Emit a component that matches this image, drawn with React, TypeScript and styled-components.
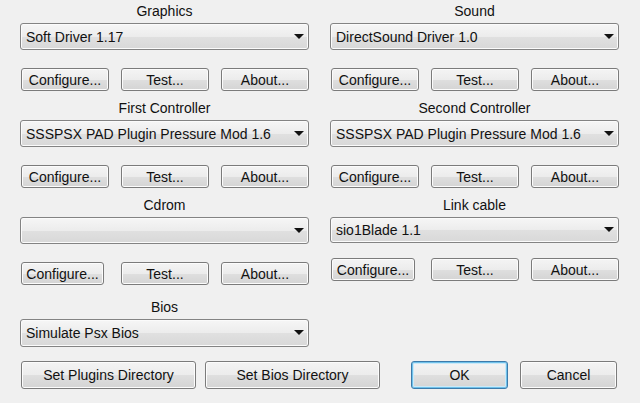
import styled, { createGlobalStyle } from "styled-components";

const GlobalStyle = createGlobalStyle`
  html, body {
    margin: 0;
    padding: 0;
    background: #f0f0f0;
  }
  body {
    font-family: "Liberation Sans", Arial, sans-serif;
    font-size: 14px;
    color: #111;
  }
`

const Dialog = styled.div`
  width: 640px;
  height: 403px;
  box-sizing: border-box;
  padding: 1px 0 0 20px;
  background: #f0f0f0;
`

const PluginGrid = styled.div`
  display: grid;
  grid-template-columns: 289px 289px;
  column-gap: 21px;
  row-gap: 7px;
`

const Section = styled.div<{ $offset?: number }>`
  display: flex;
  flex-direction: column;
  width: 289px;
  margin-top: ${(p) => p.$offset ?? 0}px;
`

const Label = styled.div`
  height: 20px;
  line-height: 20px;
  text-align: center;
  white-space: nowrap;
`

const Combo = styled.div<{ $height?: number }>`
  position: relative;
  margin-top: 2px;
  height: ${(p) => p.$height ?? 27}px;
  box-sizing: border-box;
  border: 1px solid #838383;
  border-radius: 3px;
  background: linear-gradient(#f6f6f6 0%, #ececec 50%, #e0e0e0 51%, #d8d8d8 100%);
  box-shadow: inset 0 0 0 1px #fbfbfb;
  display: flex;
  align-items: center;
  padding: 0 18px 0 5px;
  white-space: nowrap;
  overflow: hidden;
`

const Arrow = styled.span`
  position: absolute;
  right: 4px;
  top: 50%;
  margin-top: -3px;
  width: 0;
  height: 0;
  border-left: 5px solid transparent;
  border-right: 5px solid transparent;
  border-top: 5px solid #111;
`

const ButtonRow = styled.div<{ $gap?: number }>`
  display: grid;
  grid-template-columns: 88px 88px 88px;
  column-gap: 12px;
  justify-items: start;
  margin-top: ${(p) => p.$gap ?? 18}px;
  padding: 0 1px;
`

const Button = styled.button<{ $width?: number; $height?: number; $default?: boolean }>`
  width: ${(p) => p.$width ?? 88}px;
  height: ${(p) => p.$height ?? 23}px;
  box-sizing: border-box;
  padding: 0;
  font-family: "Liberation Sans", Arial, sans-serif;
  font-size: 14px;
  color: #111;
  border: 1px solid ${(p) => (p.$default ? "#3c7bab" : "#7b7b7b")};
  border-radius: 3px;
  background: linear-gradient(#f4f4f4 0%, #ececec 50%, #dfdfdf 51%, #d4d4d4 100%);
  box-shadow: ${(p) =>
    p.$default
      ? "inset 0 0 0 1px #6fc1ea, inset 0 0 0 2px #cbe9f8"
      : "inset 0 0 0 1px #fcfcfc"};
  white-space: nowrap;
`

const Footer = styled.div`
  display: flex;
  margin-top: 14px;
  padding-left: 1px;
`

const Spacer = styled.div<{ $w: number }>`
  width: ${(p) => p.$w}px;
  flex: none;
`

type Plugin = {
  label: string
  value: string
  configureWidth?: number
  comboHeight?: number
  rowGap?: number
}

const plugins: Plugin[] = [
  { label: "Graphics", value: "Soft Driver 1.17" },
  { label: "Sound", value: "DirectSound Driver 1.0" },
  { label: "First Controller", value: "SSSPSX PAD Plugin Pressure Mod 1.6" },
  { label: "Second Controller", value: "SSSPSX PAD Plugin Pressure Mod 1.6" },
  { label: "Cdrom", value: "", configureWidth: 83 },
  { label: "Link cable", value: "sio1Blade 1.1", configureWidth: 84, comboHeight: 26, rowGap: 15 },
]

function PluginSection({ label, value, configureWidth, comboHeight, rowGap }: Plugin) {
  return (
    <Section>
      <Label>{label}</Label>
      <Combo $height={comboHeight}>
        {value}
        <Arrow />
      </Combo>
      <ButtonRow $gap={rowGap}>
        <Button $width={configureWidth}>Configure...</Button>
        <Button>Test...</Button>
        <Button>About...</Button>
      </ButtonRow>
    </Section>
  )
}

export default function App() {
  return (
    <>
      <GlobalStyle />
      <Dialog>
        <PluginGrid>
          {plugins.map((p) => (
            <PluginSection key={p.label} {...p} />
          ))}
        </PluginGrid>
        <Section $offset={12}>
          <Label>Bios</Label>
          <Combo $height={28}>
            Simulate Psx Bios
            <Arrow />
          </Combo>
        </Section>
        <Footer>
          <Button $width={175} $height={28}>Set Plugins Directory</Button>
          <Spacer $w={9} />
          <Button $width={175} $height={28}>Set Bios Directory</Button>
          <Spacer $w={31} />
          <Button $width={97} $height={28} $default>OK</Button>
          <Spacer $w={12} />
          <Button $width={97} $height={28}>Cancel</Button>
        </Footer>
      </Dialog>
    </>
  )
}
